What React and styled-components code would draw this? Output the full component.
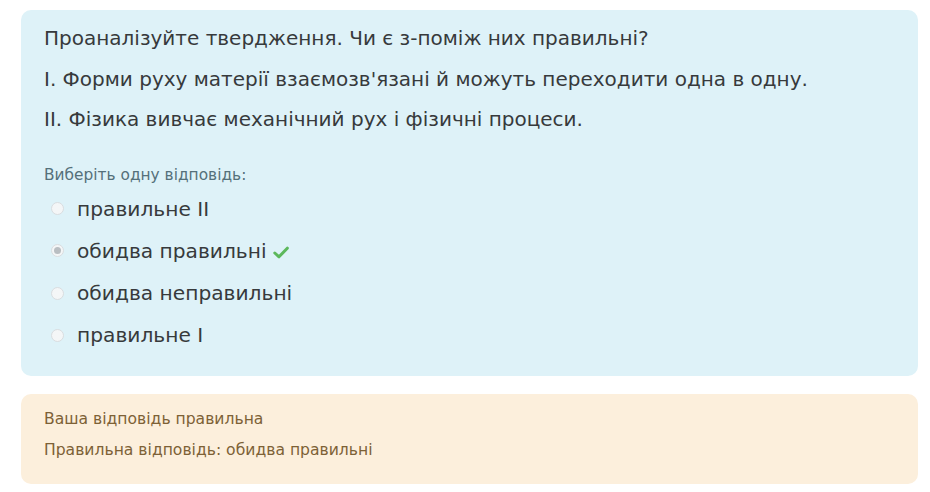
import React from "react";
import styled, { createGlobalStyle } from "styled-components";

const GlobalStyle = createGlobalStyle`
  body {
    margin: 0;
    background: #ffffff;
    font-family: "DejaVu Sans", "Noto Sans", sans-serif;
  }
`;

const options = [
  { id: "a", label: "правильне II", checked: false },
  { id: "b", label: "обидва правильні", checked: true, correct: true },
  { id: "c", label: "обидва неправильні", checked: false },
  { id: "d", label: "правильне I", checked: false }
];

const Page = styled.div`
  padding: 10px 12px 8px 21px;
  display: flex;
  flex-direction: column;
  gap: 18px;
`;

const Card = styled.div`
  background: ${props => props.tone};
  border-radius: 10px;
  padding: ${props => props.pad};
`;

const QText = styled.p`
  margin: 0 0 12px;
  font-size: 20px;
  line-height: 28.5px;
  color: #373a3c;
`;

const Prompt = styled.div`
  margin-top: 31px;
  font-size: 15.4px;
  line-height: 20px;
  color: #55707a;
`;

const Answers = styled.div`
  display: flex;
  flex-direction: column;
  gap: 14.3px;
  margin-top: 10px;
`;

const Option = styled.label`
  display: flex;
  align-items: center;
  gap: 13px;
  padding-left: 7px;
  font-size: 20.2px;
  line-height: 28px;
  color: #373a3c;
`;

const Radio = styled.span`
  width: 13px;
  height: 13px;
  border-radius: 50%;
  box-sizing: border-box;
  border: 1px solid #d9dde0;
  background: #f4f6f7;
  display: flex;
  align-items: center;
  justify-content: center;
  &::after {
    content: "";
    display: ${props => (props.checked ? "block" : "none")};
    width: 7px;
    height: 7px;
    border-radius: 50%;
    background: #b9bec2;
  }
`;

const Check = styled.svg`
  margin-left: 6px;
  width: 16px;
  height: 13px;
  vertical-align: -1px;
`;

const FeedbackLine = styled.p`
  margin: 0;
  font-size: 15.6px;
  line-height: 31px;
  color: #7d6136;
`;

const App = () => (
  <>
    <GlobalStyle />
    <Page>
      <Card tone="#def2f8" pad="14px 20px 27px 23px">
        <QText>Проаналізуйте твердження. Чи є з-поміж них правильні?</QText>
        <QText>I. Форми руху матерії взаємозв'язані й можуть переходити одна в одну.</QText>
        <QText>II. Фізика вивчає механічний рух і фізичні процеси.</QText>
        <Prompt>Виберіть одну відповідь:</Prompt>
        <Answers>
          {options.map(o => (
            <Option key={o.id}>
              <Radio checked={o.checked} />
              <span>
                {o.label}
                {o.correct && (
                  <Check viewBox="0 0 16 13">
                    <path
                      d="M1.8 7 L6 10.8 L14.3 2.2"
                      fill="none"
                      stroke="#5cb85c"
                      strokeWidth="3"
                      strokeLinecap="round"
                      strokeLinejoin="round"
                    />
                  </Check>
                )}
              </span>
            </Option>
          ))}
        </Answers>
      </Card>
      <Card tone="#fcefdc" pad="10px 20px 18px 23px">
        <FeedbackLine>Ваша відповідь правильна</FeedbackLine>
        <FeedbackLine>Правильна відповідь: обидва правильні</FeedbackLine>
      </Card>
    </Page>
  </>
);

export default App;
